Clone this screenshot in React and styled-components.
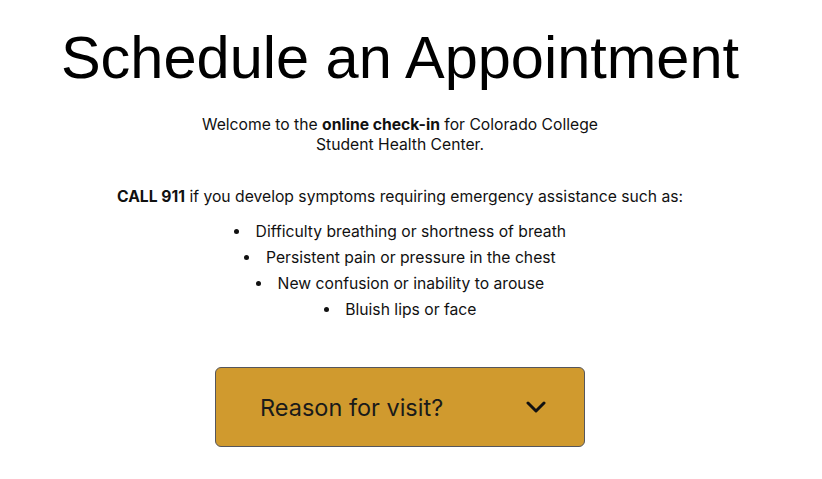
import React from "react";
import styled, { createGlobalStyle } from "styled-components";

const GlobalStyle = createGlobalStyle`
  body {
    margin: 0;
    background: #fff;
    color: #111;
    font-family: Inter, "Noto Sans", sans-serif;
  }
`;

const Page = styled.main`
  width: 800px;
  display: flex;
  flex-direction: column;
  align-items: center;
`;

const Title = styled.h1`
  margin: 18px 0 0;
  font-family: "Liberation Sans", Arial, sans-serif;
  font-weight: 400;
  font-size: 59.5px;
  line-height: 80px;
  color: #000;
`;

const Intro = styled.p`
  margin: 17px 0 0;
  width: 430px;
  text-align: center;
  font-size: 15.7px;
  line-height: 20px;
`;

const Warning = styled.p`
  margin: 32px 0 0;
  text-align: center;
  font-size: 15.7px;
  line-height: 20px;
`;

const SymptomList = styled.ul`
  margin: 12px 0 0;
  padding: 0;
  list-style: disc inside;
  text-align: center;
  font-size: 15.7px;
  line-height: 26px;
`;

const Select = styled.button`
  margin-top: 44px;
  width: 370px;
  height: 80px;
  box-sizing: border-box;
  padding: 0 38px 0 44px;
  display: flex;
  align-items: center;
  justify-content: space-between;
  background: #d09a2e;
  border: 1px solid #55565c;
  border-radius: 6px;
  font-family: Inter, "Noto Sans", sans-serif;
  font-size: 23.5px;
  color: #1a1a1a;
  cursor: pointer;
`;

const Chevron = () => (
  <svg width="20" height="12" viewBox="0 0 20 12" fill="none" stroke="#111" strokeWidth="3" strokeLinecap="round" strokeLinejoin="round">
    <path d="M2 2L10 10L18 2" />
  </svg>
);

const symptoms = [
  "Difficulty breathing or shortness of breath",
  "Persistent pain or pressure in the chest",
  "New confusion or inability to arouse",
  "Bluish lips or face",
];

export default function App() {
  return (
    <>
      <GlobalStyle />
      <Page>
        <Title>Schedule an Appointment</Title>
        <Intro>
          Welcome to the <b>online check-in</b> for Colorado College Student Health Center.
        </Intro>
        <Warning>
          <b>CALL 911</b> if you develop symptoms requiring emergency assistance such as:
        </Warning>
        <SymptomList>
          {symptoms.map((s) => (
            <li key={s}>{s}</li>
          ))}
        </SymptomList>
        <Select>
          <span>Reason for visit?</span>
          <Chevron />
        </Select>
      </Page>
    </>
  );
}
